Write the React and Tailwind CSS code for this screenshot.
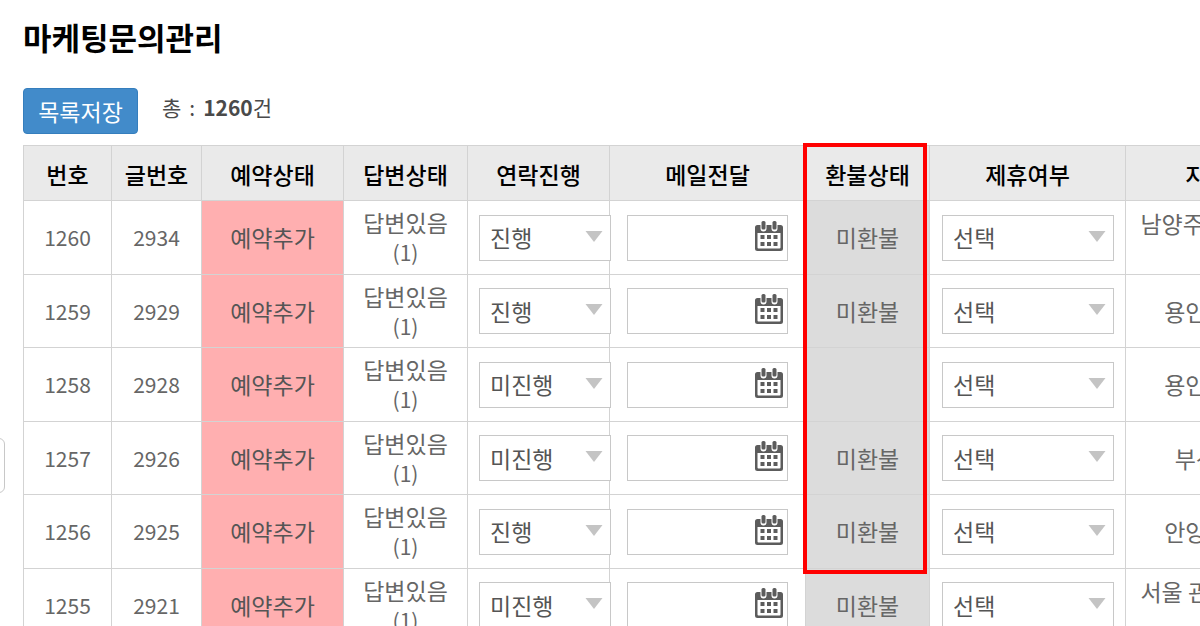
const columns = [
  { name: "번호", width: "w-[88px]" },
  { name: "글번호", width: "w-[90px]" },
  { name: "예약상태", width: "w-[142px]" },
  { name: "답변상태", width: "w-[124px]" },
  { name: "연락진행", width: "w-[142px]" },
  { name: "메일전달", width: "w-[196px]" },
  { name: "환불상태", width: "w-[124px]", marked: true },
  { name: "제휴여부", width: "w-[196px]" },
  { name: "지역", width: "w-[162px]" },
];

const rows = [
  { id: 1260, post: 2934, progress: "진행", refund: "미환불", region: "남양주시 다산", tall: true },
  { id: 1259, post: 2929, progress: "진행", refund: "미환불", region: "용인수지" },
  { id: 1258, post: 2928, progress: "미진행", refund: "", region: "용인수지" },
  { id: 1257, post: 2926, progress: "미진행", refund: "미환불", region: "부산시" },
  { id: 1256, post: 2925, progress: "진행", refund: "미환불", region: "안양동안" },
  { id: 1255, post: 2921, progress: "미진행", refund: "미환불", region: "서울 관악구청", tall: true },
];

function SelectBox({ label, value, options, className }) {
  return (
    <div className={`relative ${className}`}>
      <select
        aria-label={label}
        defaultValue={value}
        className="block w-full h-[46px] pl-[10px] pr-8 appearance-none bg-white border border-[#c8c8c8] text-[#555] outline-none"
      >
        {options.map((option) => (
          <option key={option}>{option}</option>
        ))}
      </select>
      <svg
        viewBox="0 0 18 11"
        className="absolute right-2 top-4 w-[18px] h-[11px] fill-[#c4c4c4] pointer-events-none"
      >
        <path d="M0.5 0h17L9 11z" />
      </svg>
    </div>
  );
}

function CalendarIcon() {
  return (
    <svg viewBox="0 0 28 30" className="w-7 h-[30px]">
      <path
        fill="#5c5c5c"
        fillRule="evenodd"
        d="M2.500 4H5.500v3.500a3 3 0 0 0 6 0V4h5v3.500a3 3 0 0 0 6 0V4h3A2.500 2.500 0 0 1 28 6.500v21a2.500 2.500 0 0 1-2.500 2.500h-23A2.500 2.500 0 0 1 0 27.500v-21A2.500 2.500 0 0 1 2.500 4zM2.500 12v14.500a1 1 0 0 0 1 1h21a1 1 0 0 0 1-1V12z"
      />
      <g fill="#5c5c5c">
        <rect x="6.500" y="0" width="4" height="8.500" rx="1.500" />
        <rect x="17.500" y="0" width="4" height="8.500" rx="1.500" />
        <rect x="5.500" y="14" width="4" height="4" />
        <rect x="12" y="14" width="4" height="4" />
        <rect x="18.500" y="14" width="4" height="4" />
        <rect x="5.500" y="21" width="4" height="4" />
        <rect x="12" y="21" width="4" height="4" />
        <rect x="18.500" y="21" width="4" height="4" />
      </g>
    </svg>
  );
}

function DateBox({ label }) {
  return (
    <div className="relative w-[161px] mx-auto">
      <input
        type="text"
        aria-label={label}
        className="block w-full h-[46px] pl-2 pr-10 bg-white border border-[#c8c8c8] outline-none"
      />
      <button
        type="button"
        aria-label="날짜 선택"
        className="absolute right-[5px] top-[6px]"
      >
        <CalendarIcon />
      </button>
    </div>
  );
}

function InquiryRow({ row }) {
  return (
    <tr className="h-[74px] even:h-[73px]">
      <td className="border border-[#d3d3d3] text-[21px]">{row.id}</td>
      <td className="border border-[#d3d3d3] text-[21px]">{row.post}</td>
      <td className="border border-[#d3d3d3] bg-[#ffafb0] text-[#555]">예약추가</td>
      <td className="border border-[#d3d3d3]">
        답변있음
        <br />
        <span className="text-[21px]">(1)</span>
      </td>
      <td className="border border-[#d3d3d3] pl-[11px]">
        <SelectBox
          label="연락진행"
          value={row.progress}
          options={["진행", "미진행"]}
          className="w-[132px]"
        />
      </td>
      <td className="border border-[#d3d3d3]">
        <DateBox label="메일전달" />
      </td>
      <td className="border border-[#d3d3d3] bg-[#dcdcdc]">{row.refund}</td>
      <td className="border border-[#d3d3d3] pl-[12px]">
        <SelectBox
          label="제휴여부"
          value="선택"
          options={["선택", "제휴", "비제휴"]}
          className="w-[172px]"
        />
      </td>
      <td
        className={`border border-[#d3d3d3] whitespace-nowrap ${row.tall ? "align-top pt-2" : ""}`}
      >
        {row.region}
      </td>
    </tr>
  );
}

function App() {
  return (
    <div className="relative h-screen overflow-hidden bg-white pl-[23px] pt-5 font-['Noto_Sans_CJK_KR',sans-serif] text-[23px] leading-[29px] text-[#666]">
      <button
        type="button"
        aria-label="메뉴 열기"
        className="absolute -left-2 top-[438px] w-[13px] h-[55px] rounded-md border border-[#c8c8c8] bg-white"
      />

      <h1 className="h-9 text-[31px] leading-[34px] font-bold text-black">마케팅문의관리</h1>

      <div className="flex items-start gap-6 mt-8">
        <button
          type="button"
          className="h-[46px] w-[115px] rounded-[4px] border border-[#357ebd] bg-[#428bca] text-white"
        >
          목록저장
        </button>
        <p className="flex gap-2 mt-[5px] text-[21px] text-[#4a4a4a]">
          <span>총</span>
          <span>:</span>
          <span>
            <b>1260</b>건
          </span>
        </p>
      </div>

      <table className="mt-[11px] w-[1265px] table-fixed border-collapse text-center">
        <thead>
          <tr className="h-[55px] bg-[#eaeaea] text-black">
            {columns.map((column) => (
              <th
                key={column.name}
                className={`relative pt-[3px] border border-[#d3d3d3] font-medium ${column.width}`}
              >
                {column.name}
                {column.marked && (
                  <span className="absolute z-10 -left-[3px] -top-[3px] w-[124px] h-[431px] border-4 border-[#ff0000] pointer-events-none" />
                )}
              </th>
            ))}
          </tr>
        </thead>
        <tbody>
          {rows.map((row) => (
            <InquiryRow key={row.id} row={row} />
          ))}
        </tbody>
      </table>
    </div>
  );
}

export default App;
